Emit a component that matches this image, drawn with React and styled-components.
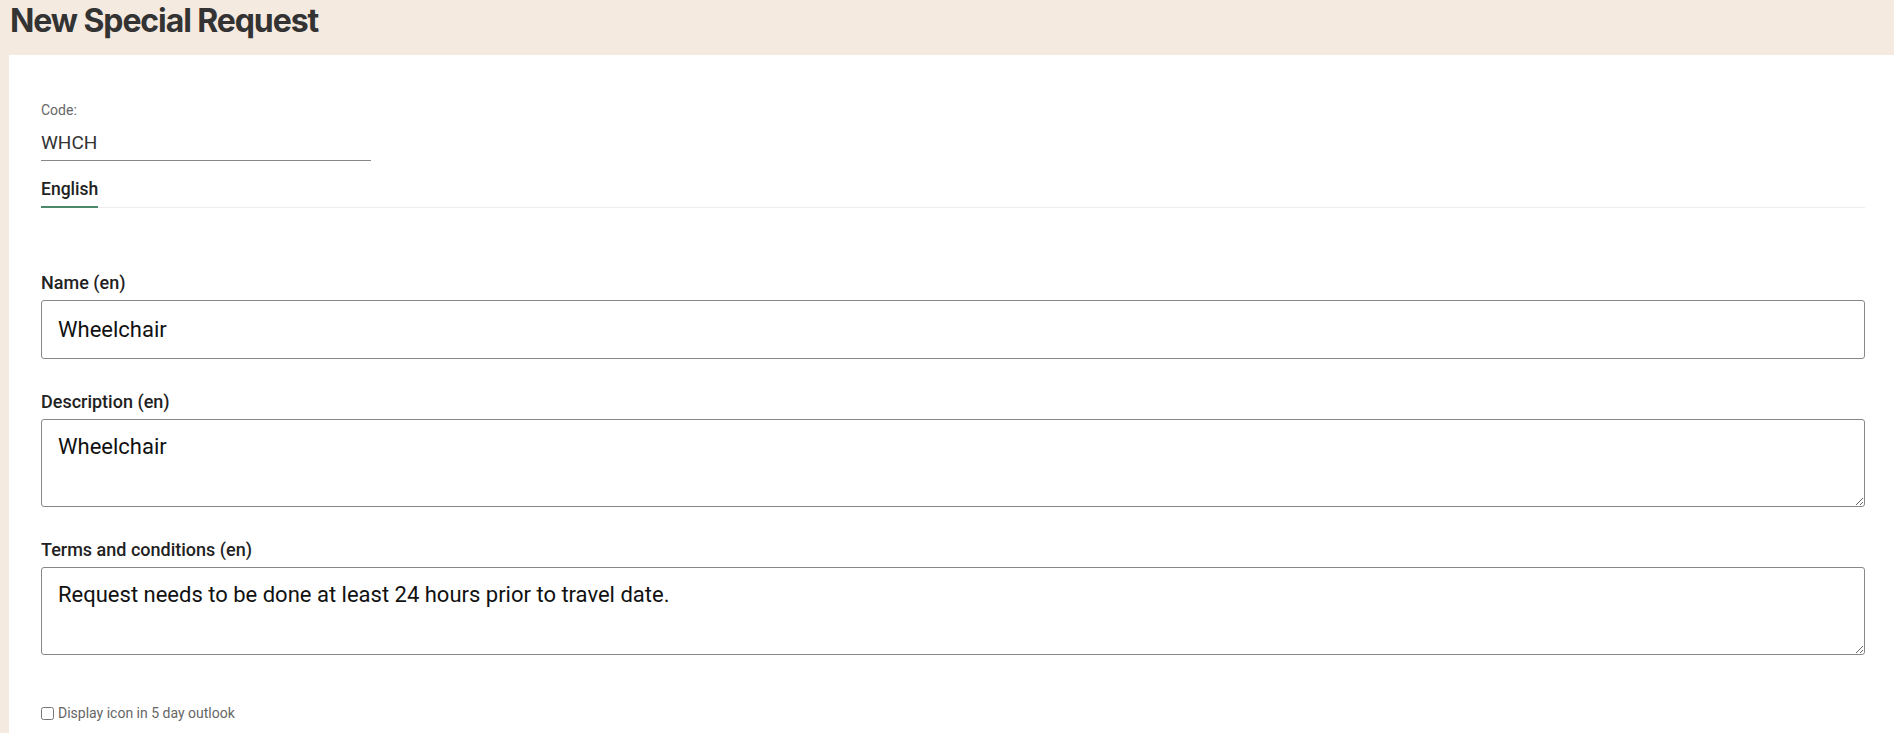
import React from 'react';
import styled, { createGlobalStyle } from 'styled-components';

const GlobalStyle = createGlobalStyle`
  html, body {
    margin: 0;
    padding: 0;
    background: #f5eae0;
    font-family: Roboto, 'Liberation Sans', sans-serif;
  }
`;

const Page = styled.div`
  min-height: 100vh;
  display: flex;
  flex-direction: column;
  background: #f5eae0;
`;

const Header = styled.header`
  height: 55px;
  padding: 0 10px;
  box-sizing: border-box;
`;

const Title = styled.h1`
  margin: 0;
  padding-top: 1px;
  font-family: Inter, 'Liberation Sans', sans-serif;
  font-size: 32px;
  line-height: 40px;
  font-weight: 700;
  letter-spacing: -0.034em;
  color: #333;
`;

const Panel = styled.main`
  flex: 1;
  margin-left: 9px;
  background: #fff;
  padding: 47px 29px 20px 32px;
`;

const CodeLabel = styled.label`
  display: block;
  font-size: 14px;
  line-height: 17px;
  color: #666;
  margin-bottom: 5px;
`;

const CodeInput = styled.input`
  display: block;
  width: 330px;
  height: 37px;
  box-sizing: border-box;
  border: none;
  border-bottom: 1px solid #888;
  padding: 0;
  font-family: Roboto, 'Liberation Sans', sans-serif;
  font-size: 19px;
  color: #333;
  background: transparent;
  outline: none;
`;

const Tabs = styled.div`
  display: flex;
  margin-top: 18px;
  border-bottom: 1px solid #eee;
  margin-bottom: 63px;
`;

const Tab = styled.div`
  font-size: 17.5px;
  line-height: 20px;
  font-weight: 500;
  color: #222;
  padding-bottom: 7px;
  margin-bottom: -1px;
  border-bottom: 2px solid ${({ active }) => (active ? '#4a8a6a' : 'transparent')};
`;

const Field = styled.div`
  margin-bottom: 31px;
`;

const FieldLabel = styled.label`
  display: block;
  font-size: 18px;
  line-height: 24px;
  font-weight: 500;
  color: #222;
  margin-bottom: 5px;
`;

const TextInput = styled.input`
  display: block;
  width: 100%;
  height: 59px;
  box-sizing: border-box;
  border: 1px solid #888;
  border-radius: 3px;
  padding: 0 16px;
  font-family: Roboto, 'Liberation Sans', sans-serif;
  font-size: 22px;
  color: #111;
  outline: none;
`;

const TextArea = styled.textarea`
  display: block;
  width: 100%;
  height: 88px;
  box-sizing: border-box;
  border: 1px solid #888;
  border-radius: 3px;
  padding: 14px 16px 10px;
  font-family: Roboto, 'Liberation Sans', sans-serif;
  font-size: 22px;
  color: #111;
  outline: none;
`;

const CheckRow = styled.label`
  display: flex;
  align-items: center;
  margin-top: 48px;
  font-size: 14px;
  line-height: 20px;
  color: #666;

  input {
    margin: 0 4px 0 0;
    width: 13px;
    height: 13px;
  }
`;

export default function App() {
  return (
    <Page>
      <GlobalStyle />
      <Header>
        <Title>New Special Request</Title>
      </Header>
      <Panel>
        <CodeLabel>Code:</CodeLabel>
        <CodeInput defaultValue="WHCH" />
        <Tabs>
          <Tab active>English</Tab>
        </Tabs>
        <Field>
          <FieldLabel>Name (en)</FieldLabel>
          <TextInput defaultValue="Wheelchair" />
        </Field>
        <Field>
          <FieldLabel>Description (en)</FieldLabel>
          <TextArea defaultValue="Wheelchair" />
        </Field>
        <Field>
          <FieldLabel>Terms and conditions (en)</FieldLabel>
          <TextArea defaultValue="Request needs to be done at least 24 hours prior to travel date." />
        </Field>
        <CheckRow>
          <input type="checkbox" />
          Display icon in 5 day outlook
        </CheckRow>
      </Panel>
    </Page>
  );
}
